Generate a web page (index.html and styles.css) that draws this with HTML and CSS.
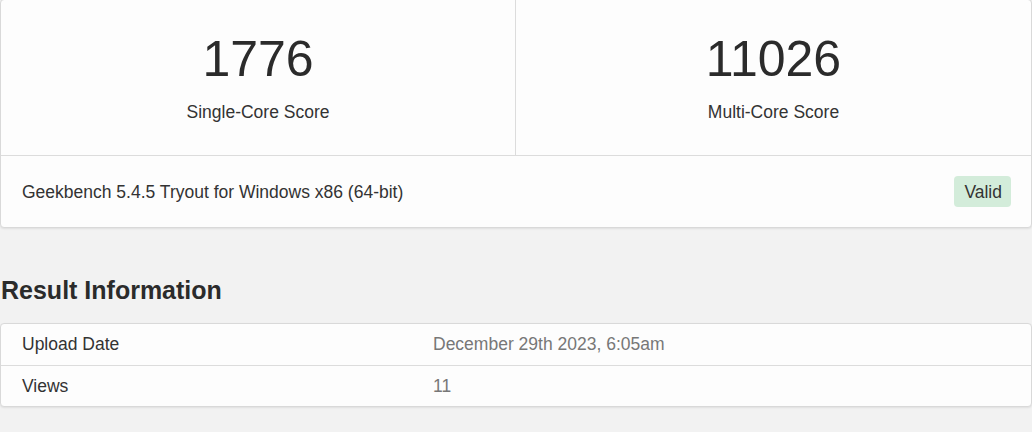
FILE: index.html
```html
<!DOCTYPE html>
<html lang="en">
<head>
<meta charset="utf-8">
<title>Geekbench Result</title>
<link rel="stylesheet" href="styles.css">
</head>
<body>
<div class="page">
  <div class="card score-card">
    <div class="scores">
      <div class="score">
        <div class="score-value">1776</div>
        <div class="score-label">Single-Core Score</div>
      </div>
      <div class="score">
        <div class="score-value">11026</div>
        <div class="score-label">Multi-Core Score</div>
      </div>
    </div>
    <div class="score-footer">
      <span class="version">Geekbench 5.4.5 Tryout for Windows x86 (64-bit)</span>
      <span class="badge">Valid</span>
    </div>
  </div>

  <h2 class="section-title">Result Information</h2>

  <div class="card info-card">
    <div class="info-row">
      <div class="info-name">Upload Date</div>
      <div class="info-value">December 29th 2023, 6:05am</div>
    </div>
    <div class="info-row">
      <div class="info-name">Views</div>
      <div class="info-value">11</div>
    </div>
  </div>
</div>
</body>
</html>
```

FILE: styles.css
```css
* { box-sizing: border-box; }

html, body {
  margin: 0;
  padding: 0;
  background: #f2f2f2;
}

body {
  font-family: "Liberation Sans", Arial, sans-serif;
  color: #333333;
  font-size: 17.5px;
  line-height: 24px;
}

.page {
  width: 1032px;
}

.card {
  background: #fdfdfd;
  border: 1px solid #d9d9d9;
  border-radius: 4px;
  box-shadow: 0 1px 2px rgba(0, 0, 0, 0.08);
}

.score-card {
  margin-top: -1px;
}

.scores {
  display: grid;
  grid-template-columns: 514px 1fr;
  border-bottom: 1px solid #dcdcdc;
}

.score {
  display: flex;
  flex-direction: column;
  align-items: center;
  padding: 29px 0 31px;
}

.score + .score {
  border-left: 1px solid #dcdcdc;
}

.score-value {
  font-size: 50px;
  line-height: 60px;
  color: #2b2b2b;
}

.score-label {
  margin-top: 11px;
  font-size: 17.5px;
  line-height: 24px;
  color: #333333;
}

.score-footer {
  display: flex;
  align-items: center;
  justify-content: space-between;
  padding: 20px 20px 20px 21px;
}

.badge {
  display: inline-block;
  background: #d3ecda;
  color: #333333;
  border-radius: 4px;
  padding: 4px 9px 3px 10px;
  line-height: 24px;
}

.section-title {
  margin: 47px 0 18px 1px;
  font-size: 25px;
  line-height: 30px;
  font-weight: bold;
  color: #2b2b2b;
}

.info-card {
  margin-bottom: 24px;
}

.info-row {
  display: grid;
  grid-template-columns: 411px 1fr;
  padding: 8px 0 9px;
}

.info-row + .info-row {
  border-top: 1px solid #dcdcdc;
  padding: 8px 0 8px;
}

.info-name {
  padding-left: 21px;
  color: #333333;
}

.info-value {
  padding-left: 21px;
  color: #777777;
}
```
